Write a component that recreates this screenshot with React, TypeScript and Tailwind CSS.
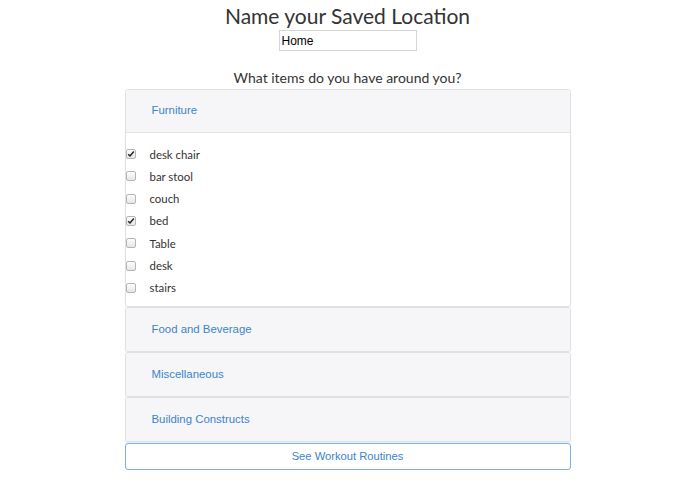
import { useState } from "react";

const furniture = [
  { name: "desk chair", checked: true },
  { name: "bar stool", checked: false },
  { name: "couch", checked: false },
  { name: "bed", checked: true },
  { name: "Table", checked: false },
  { name: "desk", checked: false },
  { name: "stairs", checked: false },
];

const Box = ({ checked }: { checked: boolean }) => (
  <span className="w-[10px] h-[10px] rounded-[2px] border border-[#b5b5b5] bg-gradient-to-b from-[#fdfdfd] to-[#e6e6e6] flex items-center justify-center">
    {checked && (
      <svg width="8" height="8" viewBox="0 0 8 8">
        <path d="M1.2 4.2 L3 6 L6.8 1.6" fill="none" stroke="#222" strokeWidth="1.5" />
      </svg>
    )}
  </span>
);

const Header = ({ title, border }: { title: string; border?: boolean }) => (
  <div
    className={
      "h-[43px] flex items-center pl-[26px] bg-[#f6f6f8] text-[11.4px] text-[#3c84cc] font-['Liberation_Sans',sans-serif] " +
      (border ? "border-b border-[#e3e3e3]" : "")
    }
  >
    {title}
  </div>
);

const App = () => {
  const [name, setName] = useState("Home");

  return (
    <div className="w-[695px] h-[494px] bg-white flex flex-col items-center font-['Lato',sans-serif] text-[#333]">
      <h1 className="text-[21px] leading-[26px] mt-[3px] text-[#333]">Name your Saved Location</h1>
      <input
        value={name}
        onChange={(e) => setName(e.target.value)}
        className="w-[138px] h-[21px] mt-[1px] border border-[#d6d6d6] px-[2px] text-[12px] text-black font-['Liberation_Sans',sans-serif] outline-none"
      />
      <p className="text-[14px] leading-[20px] mt-[17px] text-[#333]">What items do you have around you?</p>

      <div className="w-[446px] mt-[1px] flex flex-col">
        <div className="rounded-[3px] border border-[#e0e0e0] shadow-[0_1px_1px_rgba(0,0,0,0.06)] overflow-hidden">
          <Header title="Furniture" border />
          <div className="bg-white pt-[10px] pb-[7px] flex flex-col">
            {furniture.map((item) => (
              <div key={item.name} className="h-[22.3px] flex items-center">
                <Box checked={item.checked} />
                <span className="ml-[14px] text-[11.4px] text-[#333]">{item.name}</span>
              </div>
            ))}
          </div>
        </div>
        {["Food and Beverage", "Miscellaneous", "Building Constructs"].map((t) => (
          <div
            key={t}
            className="rounded-[3px] border border-[#e0e0e0] shadow-[0_1px_1px_rgba(0,0,0,0.08)] overflow-hidden"
          >
            <Header title={t} />
          </div>
        ))}
        <button className="mt-[1px] h-[27px] rounded-[3px] border border-[#7fb0e3] bg-white text-[11.2px] text-[#3c84cc] font-['Liberation_Sans',sans-serif]">
          See Workout Routines
        </button>
      </div>
    </div>
  );
};

export default App;
